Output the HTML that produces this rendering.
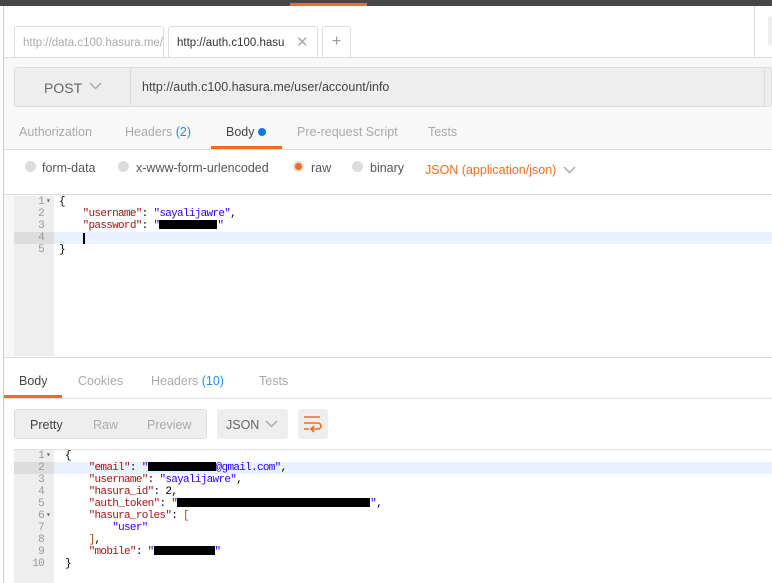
<!DOCTYPE html>
<html><head><style>
*{margin:0;padding:0;box-sizing:border-box}
body{width:772px;height:583px;overflow:hidden;background:#fff;font-family:"Liberation Sans",sans-serif;position:relative;color:#505050}
.a{position:absolute}
.mono{font-family:"Liberation Mono",monospace;font-size:11px;line-height:12px;letter-spacing:-0.7px}
.k{color:#a31515}.s{color:#2a00ff}.bk{background:#000;display:inline-block;height:9px;vertical-align:-1px}
.ln{color:#999;text-align:right;width:30px;position:absolute;left:0}
.ar{position:absolute;left:32px;color:#666;font-size:8px;letter-spacing:0}
</style></head><body>
<div class="a" style="left:0;top:0;width:772px;height:6px;background:#464646"></div>
<div class="a" style="left:290px;top:3px;width:77px;height:3px;background:#f26b21"></div>
<div class="a" style="left:3px;top:6px;width:1px;height:577px;background:#ccc"></div>
<div class="a" style="left:754px;top:6px;width:1px;height:51px;background:#ddd"></div>
<div class="a" style="left:768px;top:16px;width:4px;height:30px;background:#eee;border-radius:3px"></div>
<div class="a" style="left:14px;top:26px;width:150px;height:31px;border:1px solid #ddd;border-bottom:none;border-radius:3px 3px 0 0;font-size:11.5px;color:#aaa;padding:10px 8px;white-space:nowrap;overflow:hidden">http://data.c100.hasura.me/</div>
<div class="a" style="left:168px;top:26px;width:150px;height:32px;border:1px solid #ddd;border-bottom:none;border-radius:3px 3px 0 0;font-size:11.5px;color:#333;padding:10px 8px;white-space:nowrap;background:#fff">http://auth.c100.hasu<span style="color:#aaa;position:absolute;left:127px;top:6px;font-size:15px">✕</span></div>
<div class="a" style="left:322px;top:26px;width:29px;height:31px;border:1px solid #ddd;border-bottom:none;border-radius:3px 3px 0 0;font-size:16px;color:#999;text-align:center;line-height:30px">+</div>
<div class="a" style="left:4px;top:57px;width:768px;height:300px;background:#f8f8f8;border-top:1px solid #ddd"></div>
<div class="a" style="left:14px;top:67px;width:758px;height:40px;background:#eee;border:1px solid #ddd;border-radius:3px"></div>
<div class="a" style="left:130px;top:67px;width:1px;height:40px;background:#ddd"></div>
<div class="a" style="left:764px;top:67px;width:1px;height:40px;background:#ddd"></div>
<div class="a" style="left:44px;top:80px;font-size:14px;color:#666">POST</div>
<svg class="a" style="left:89px;top:82px" width="13" height="9"><path d="M1 1l5.5 5.5L12 1" stroke="#aaa" stroke-width="1.5" fill="none"/></svg>
<div class="a" style="left:142px;top:80px;font-size:12.5px;color:#444">http://auth.c100.hasura.me/user/account/info</div>
<div class="a" style="left:4px;top:149px;width:768px;height:1px;background:#ddd"></div>
<div class="a" style="left:19px;top:125px;font-size:12.5px;color:#aaa">Authorization</div>
<div class="a" style="left:125px;top:125px;font-size:12.5px;color:#aaa">Headers <span style="color:#2b8de4">(2)</span></div>
<div class="a" style="left:226px;top:125px;font-size:12.5px;color:#444">Body <span style="display:inline-block;width:8px;height:8px;border-radius:50%;background:#0f7ae5;vertical-align:0px"></span></div>
<div class="a" style="left:211px;top:146px;width:71px;height:3px;background:#f26b21"></div>
<div class="a" style="left:297px;top:125px;font-size:12.5px;color:#aaa">Pre-request Script</div>
<div class="a" style="left:428px;top:125px;font-size:12.5px;color:#aaa">Tests</div>
<div class="a" style="left:4px;top:150px;width:768px;height:45px;background:#fff;border-bottom:1px solid #ddd"></div>
<div class="a" style="left:25px;top:161px;width:11px;height:11px;border-radius:50%;background:#ddd"></div>
<div class="a" style="left:42px;top:161px;font-size:12.5px;color:#555">form-data</div>
<div class="a" style="left:118px;top:161px;width:11px;height:11px;border-radius:50%;background:#ddd"></div>
<div class="a" style="left:136px;top:161px;font-size:12.5px;color:#555">x-www-form-urlencoded</div>
<div class="a" style="left:293px;top:161px;width:11px;height:11px;border-radius:50%;background:#f26b21;border:2px solid #ddd"></div>
<div class="a" style="left:311px;top:161px;font-size:12.5px;color:#555">raw</div>
<div class="a" style="left:352px;top:161px;width:11px;height:11px;border-radius:50%;background:#ddd"></div>
<div class="a" style="left:370px;top:161px;font-size:12.5px;color:#555">binary</div>
<div class="a" style="left:425px;top:163px;font-size:12.5px;color:#f26b21">JSON (application/json)</div>
<svg class="a" style="left:563px;top:166px" width="13" height="8"><path d="M1 1l5.5 5.5L12 1" stroke="#aaa" stroke-width="1.5" fill="none"/></svg>
<div class="a" style="left:14px;top:196px;width:758px;height:160px;background:#fff"></div>
<div class="a" style="left:14px;top:196px;width:40px;height:160px;background:#eee"></div>
<div class="a" style="left:14px;top:232px;width:40px;height:12px;background:#ddd"></div>
<div class="a" style="left:54px;top:232px;width:718px;height:12px;background:#e8f2fe"></div>
<div class="a mono" style="left:14px;top:196px;width:44px">
<div style="position:relative;height:12px"><span class="ln">1</span><span class="ar">▾</span></div>
<div style="position:relative;height:12px"><span class="ln">2</span></div>
<div style="position:relative;height:12px"><span class="ln">3</span></div>
<div style="position:relative;height:12px"><span class="ln">4</span></div>
<div style="position:relative;height:12px"><span class="ln">5</span></div>
</div>
<pre class="a mono" style="left:59px;top:196px;color:#000">{
    <span class="k">"username"</span>: <span class="s">"sayalijawre"</span>,
    <span class="k">"password"</span>: <span class="s">"</span><span class="bk" style="width:58px"></span><span class="s">"</span>

}</pre>
<div class="a" style="left:83px;top:233px;width:1.5px;height:11px;background:#000"></div>
<div class="a" style="left:4px;top:357px;width:768px;height:1px;background:#ddd"></div>
<div class="a" style="left:4px;top:398px;width:768px;height:1px;background:#ddd"></div>
<div class="a" style="left:19px;top:374px;font-size:12.5px;color:#444">Body</div>
<div class="a" style="left:4px;top:395px;width:58px;height:3px;background:#f26b21"></div>
<div class="a" style="left:78px;top:374px;font-size:12.5px;color:#aaa">Cookies</div>
<div class="a" style="left:151px;top:374px;font-size:12.5px;color:#aaa">Headers <span style="color:#2b8de4">(10)</span></div>
<div class="a" style="left:259px;top:374px;font-size:12.5px;color:#aaa">Tests</div>
<div class="a" style="left:4px;top:399px;width:768px;height:184px;background:#fff"></div>
<div class="a" style="left:14px;top:409px;width:193px;height:30px;background:#eee;border:1px solid #ddd;border-radius:3px"></div>
<div class="a" style="left:30px;top:418px;font-size:12.5px;color:#444">Pretty</div>
<div class="a" style="left:93px;top:418px;font-size:12.5px;color:#aaa">Raw</div>
<div class="a" style="left:147px;top:418px;font-size:12.5px;color:#aaa">Preview</div>
<div class="a" style="left:217px;top:409px;width:71px;height:30px;background:#eee;border-radius:3px"></div>
<div class="a" style="left:226px;top:418px;font-size:12.5px;color:#666">JSON</div>
<svg class="a" style="left:265px;top:420px" width="13" height="8"><path d="M1 1l5.5 5.5L12 1" stroke="#aaa" stroke-width="1.5" fill="none"/></svg>
<div class="a" style="left:298px;top:409px;width:30px;height:30px;background:#eee;border-radius:3px"></div>
<svg class="a" style="left:303px;top:415px" width="20" height="18"><path d="M1 2h16M1 8h14a3 3 0 0 1 0 6H9M1 14h5M11 11l-3 3 3 3" stroke="#f26b21" stroke-width="1.6" fill="none"/></svg>
<div class="a" style="left:14px;top:449px;width:758px;height:1px;background:#ddd"></div>
<div class="a" style="left:14px;top:450px;width:40px;height:133px;background:#eee"></div>
<div class="a" style="left:14px;top:462px;width:40px;height:12px;background:#ddd"></div>
<div class="a" style="left:54px;top:462px;width:718px;height:12px;background:#e8f2fe"></div>
<div class="a mono" style="left:14px;top:450px;width:44px">
<div style="position:relative;height:12px"><span class="ln">1</span><span class="ar">▾</span></div>
<div style="position:relative;height:12px"><span class="ln">2</span></div>
<div style="position:relative;height:12px"><span class="ln">3</span></div>
<div style="position:relative;height:12px"><span class="ln">4</span></div>
<div style="position:relative;height:12px"><span class="ln">5</span></div>
<div style="position:relative;height:12px"><span class="ln">6</span><span class="ar">▾</span></div>
<div style="position:relative;height:12px"><span class="ln">7</span></div>
<div style="position:relative;height:12px"><span class="ln">8</span></div>
<div style="position:relative;height:12px"><span class="ln">9</span></div>
<div style="position:relative;height:12px"><span class="ln">10</span></div>
</div>
<pre class="a mono" style="left:65px;top:450px;color:#000">{
    <span class="k">"email"</span>: <span class="s">"</span><span class="bk" style="width:68px"></span><span class="s">@gmail.com"</span>,
    <span class="k">"username"</span>: <span class="s">"sayalijawre"</span>,
    <span class="k">"hasura_id"</span>: 2,
    <span class="k">"auth_token"</span>: <span class="s">"</span><span class="bk" style="width:193px"></span><span class="s">"</span>,
    <span class="k">"hasura_roles"</span>: <span style="color:#a0522d">[</span>
        <span class="s">"user"</span>
    <span style="color:#a0522d">]</span>,
    <span class="k">"mobile"</span>: <span class="s">"</span><span class="bk" style="width:61px"></span><span class="s">"</span>
}</pre>
</body></html>
